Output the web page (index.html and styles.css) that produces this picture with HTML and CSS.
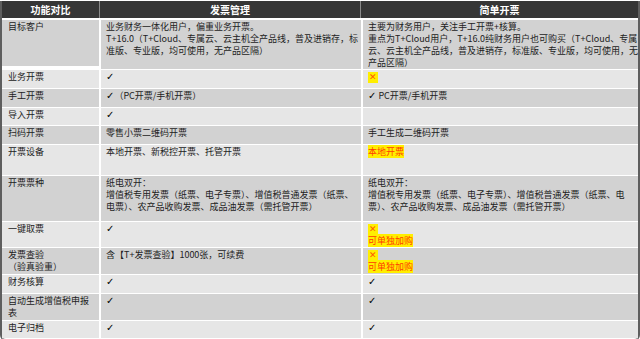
FILE: index.html
```html
<!DOCTYPE html>
<html lang="zh">
<head>
<meta charset="utf-8">
<link rel="stylesheet" href="styles.css">
</head>
<body>
<div class="frame">
  <div class="head">
    <div class="hc">功能对比</div>
    <div class="hc">发票管理</div>
    <div class="hc">简单开票</div>
  </div>
  <div class="grid">
    <div class="c dk h46">目标客户</div>
    <div class="c dk">业务财务一体化用户，偏重业务开票。<br>T+16.0（T+Cloud、专属云、云主机全产品线，普及进销存，标<br>准版、专业版，均可使用，无产品区隔）</div>
    <div class="c dk">主要为财务用户，关注手工开票+核算。<br>重点为T+Cloud用户，T+16.0纯财务用户也可购买（T+Cloud、专属<br>云、云主机全产品线，普及进销存，标准版、专业版，均可使用，无<br>产品区隔）</div>

    <div class="c lt h18">业务开票</div>
    <div class="c lt"><span class="ck">✓</span></div>
    <div class="c lt"><span class="xbox">✕</span></div>

    <div class="c dk h18">手工开票</div>
    <div class="c dk"><span class="ck">✓</span>（PC开票/手机开票）</div>
    <div class="c dk"><span class="ck">✓</span> PC开票/手机开票</div>

    <div class="c lt h17">导入开票</div>
    <div class="c lt"><span class="ck">✓</span></div>
    <div class="c lt"></div>

    <div class="c dk h18">扫码开票</div>
    <div class="c dk">零售小票二维码开票</div>
    <div class="c dk">手工生成二维码开票</div>

    <div class="c lt h30">开票设备</div>
    <div class="c lt">本地开票、新税控开票、托管开票</div>
    <div class="c lt"><span class="hl">本地开票</span></div>

    <div class="c dk h45">开票票种</div>
    <div class="c dk">纸电双开：<br>增值税专用发票（纸票、电子专票）、增值税普通发票（纸票、<br>电票）、农产品收购发票、成品油发票（需托管开票）</div>
    <div class="c dk">纸电双开：<br>增值税专用发票（纸票、电子专票）、增值税普通发票（纸票、电<br>票）、农产品收购发票、成品油发票（需托管开票）</div>

    <div class="c lt h25">一键取票</div>
    <div class="c lt"><span class="ck">✓</span></div>
    <div class="c lt"><span class="xbox">✕</span><br><span class="hl">可单独加购</span></div>

    <div class="c dk h26">发票查验<br>（验真验重）</div>
    <div class="c dk">含【T+发票查验】1000张，可续费</div>
    <div class="c dk"><span class="xbox">✕</span><br><span class="hl">可单独加购</span></div>

    <div class="c lt h18">财务核算</div>
    <div class="c lt"><span class="ck">✓</span></div>
    <div class="c lt"><span class="ck">✓</span></div>

    <div class="c dk h26">自动生成增值税申报<br>表</div>
    <div class="c dk"><span class="ck">✓</span></div>
    <div class="c dk"><span class="ck">✓</span></div>

    <div class="c lt h17">电子归档</div>
    <div class="c lt"><span class="ck">✓</span></div>
    <div class="c lt"><span class="ck">✓</span></div>
  </div>
</div>
</body>
</html>
```
FILE: styles.css
```css
html, body {
  margin: 0;
  padding: 0;
  background: #ffffff;
}
body {
  width: 640px;
  height: 339px;
  overflow: hidden;
  font-family: "Noto Sans CJK SC", "Noto Sans", sans-serif;
  font-size: 9px;
  line-height: 12px;
  color: #222222;
}
.frame {
  margin-top: 1px;
  border-left: 2px solid #5e5e5e;
  border-right: 2px solid #5e5e5e;
  border-bottom: 2px solid #8c8c8c;
  border-radius: 0 0 6px 6px;
  background: #ffffff;
  width: 636px;
  padding-bottom: 1px;
}
.head {
  display: grid;
  grid-template-columns: 97px 260px 1fr;
  column-gap: 1px;
  background: #8a8a8a;
  height: 17px;
  margin-bottom: 2px;
}
.hc {
  background: #363636;
  color: #ffffff;
  font-weight: bold;
  font-size: 10px;
  line-height: 17px;
  text-align: center;
}
.grid {
  display: grid;
  grid-template-columns: 97px 260px 1fr;
  column-gap: 2px;
  row-gap: 1px;
  background: #ffffff;
}
.c {
  padding: 1px 4px 0 5px;
  white-space: nowrap;
  overflow: hidden;
}
.grid .c:nth-child(3n+1) { padding-left: 6px; }
.dk { background: #d2d2d2; }
.lt { background: #e6e6e6; }
.h17 { height: 16px; }
.h18 { height: 17px; }
.h25 { height: 24px; }
.h26 { height: 25px; }
.h30 { height: 29px; }
.h45 { height: 44px; }
.h46 { height: 45px; }
.ck {
  font-family: "DejaVu Sans", sans-serif;
  font-size: 10px;
  color: #000;
}
.xbox {
  display: inline-block;
  background: #ffee00;
  color: #ff5a00;
  font-family: "DejaVu Sans", sans-serif;
  font-size: 9px;
  line-height: 11px;
  padding: 0 1px;
  margin-top: 1px;
}
.hl {
  background: #ffee00;
  color: #ff3b00;
}
```
